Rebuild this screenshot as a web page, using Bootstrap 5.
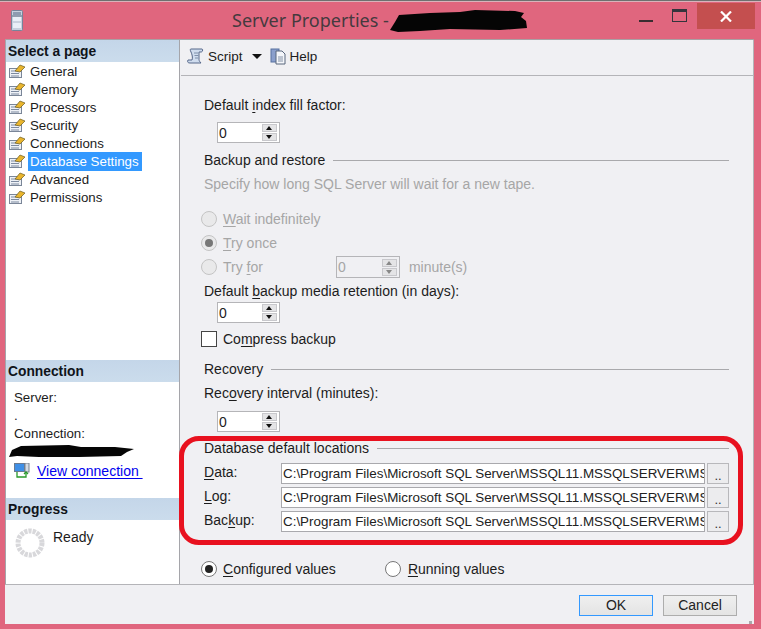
<!DOCTYPE html>
<html lang="en">
<head>
<meta charset="utf-8">
<title>Server Properties</title>
<link rel="stylesheet" href="https://cdn.jsdelivr.net/npm/bootstrap@5.3.0/dist/css/bootstrap.min.css">
<style>
html,body{margin:0;height:629px;overflow:hidden}
body{background:#e0667e;font:14px/20px "Liberation Sans",Arial,sans-serif;color:#1c1c1c;position:relative}
u{text-underline-offset:2px;text-decoration-thickness:1px}
.win-top{height:2px;background:linear-gradient(#6f6f6f 0 1px,#d9b3bb 1px)}
.title-bar{height:37px;position:relative}
.app-ico{position:absolute;left:11px;top:8px}
.win-title{position:absolute;left:232px;top:5px;font:18px/26px "Noto Sans",sans-serif;color:#453a3e;white-space:nowrap}
.blot-a{position:absolute;left:390px;top:7px}
.btn-min{position:absolute;left:639px;top:18px;width:14px;height:2px;background:#3a2c30}
.btn-max{position:absolute;left:672px;top:7px;width:15px;height:13px;border:1px solid #33343c;border-top-width:3px}
.btn-close-x{position:absolute;left:697px;top:1px;width:58px;height:26px;background:#c44f4f;color:#fff;display:flex;align-items:center;justify-content:center}
.client{margin:0 7px 0 5px;height:585px;background:#f0f0f3;display:flex;flex-direction:column;border-top:1px solid #a9a0a4}
.main-area{height:545px;display:flex;border-bottom:1px solid #b4b4b8}
.side{width:175px;flex:none;background:#fff;border-left:1px solid #a5a5aa;border-right:1px solid #a5a5aa;position:relative;display:flex;flex-direction:column}
.side-head{height:22px;background:linear-gradient(#c4d6e9,#cbdcec);font-weight:700;line-height:24px;padding-left:2px;color:#10141a;font-size:13.8px}
.page-list{height:298px}
.page-row{height:18px;line-height:19px;display:flex;align-items:center;padding-left:3px;font-size:13.3px}
.page-row svg{margin-right:4px;flex:none}
.page-row span{padding:0 3px 0 0}
.page-row.sel span{background:#3399ff;color:#fff}
.page-row.sel svg{margin-right:2px}
.page-row.sel span{padding:0 3px 0 2px}
.conn-box{height:116px;padding:7px 0 0 8px;position:relative;font-size:13.3px}
.conn-box div{height:18px;line-height:18px}
.blot-b{position:absolute;left:3px;top:62px}
.conn-link{display:flex;align-items:center;gap:7px;font-size:14px;margin-top:-2px}
.conn-link a{color:#0000ee;text-decoration:underline;text-underline-offset:2px;white-space:pre}
.prog-box{flex:1;display:flex;padding:7px 0 0 9px;gap:8px}
.prog-box svg{margin-top:1px}
.right-pane{flex:1;display:flex;flex-direction:column;min-width:0;padding-left:1px;border-right:1px solid #b4b4b8}
.tool-strip{height:36px;border-bottom:1px solid #b4b4b8;display:flex;align-items:center;padding:0 0 2px 6px;flex:none;font-size:13.5px}
.tool-strip svg{flex:none}
.tool-txt{margin-left:4px}
.caret-d{width:0;height:0;border-left:5px solid transparent;border-right:5px solid transparent;border-top:5px solid #111;margin:0 8px 0 9px}
.form-pane{padding:19px 0 0 23px;position:relative}
.line{height:20px;white-space:nowrap}
.muted-t{color:#a6a6a6}
.spin{width:63px;height:21px;margin-left:13px;background:#fff;border:1px solid #b5b5b8;display:flex;align-items:center;justify-content:space-between;padding:0 2px 0 1px;line-height:18px}
.spin.off{width:64px;height:22px;background:#f0f0f3;margin:0 0 0 67px;color:#a6a6a6}
.arrows{width:15px;height:17px;display:flex;flex-direction:column;gap:1px}
.arrows i{flex:1;background:#e4e4e6;border:1px solid #c8c8cc;position:relative;display:block}
.arrows i::after{content:"";position:absolute;left:3px;width:0;height:0;border-left:3.5px solid transparent;border-right:3.5px solid transparent}
.arrows i.up::after{top:1px;border-bottom:4px solid #111}
.arrows i.dn::after{top:1px;border-top:4px solid #111}
.spin.off i.up::after{border-bottom-color:#888}
.spin.off i.dn::after{border-top-color:#888}
.group-line{display:flex;align-items:center;gap:8px;margin-right:24px}
.group-line::after{content:"";flex:1;height:1px;background:#a9a9ac}
.radio-row{display:flex;align-items:center;gap:6px;margin-left:-3px}
.rad{width:16px;height:16px;border-radius:50%;border:1px solid #777;background:#fff;flex:none;display:flex;align-items:center;justify-content:center}
.rad.on::after{content:"";width:8px;height:8px;border-radius:50%;background:#222}
.rad.off{border-color:#c4c4c4;background:#e9e9ea}
.rad.off.on::after{background:#777}
.rad.far{margin-left:43px}
.rad.far + span{margin-left:1px}
.chk{width:16px;height:16px;border:1px solid #444;background:#fff;flex:none}
.m4{margin-top:4px}.m1{margin-top:1px}.m6{margin-top:6px}.m7{margin-top:7px}.m8{margin-top:8px}.m10{margin-top:10px}.m15{margin-top:15px}.m5{margin-top:5px}.m27{margin-top:27px}.m3{margin-top:3px}
.min-t{margin-left:3px}
.loc-row{display:flex;height:21px;align-items:center}
.loc-lab{width:77px;flex:none;margin-top:-3px}
.loc-in{width:424px;height:21px;border:1px solid #a9a9ad;background:#fff;overflow:hidden;white-space:nowrap;padding:0 0 0 1px;line-height:19px;color:#222;flex:none;font-size:13.4px}
.loc-btn{width:22px;height:21px;margin-left:2px;border:1px solid #b8b8bb;background:#ececee;font-size:13px;line-height:24px;text-align:center;flex:none;color:#333}
.red-ring{position:absolute;left:-2px;top:360px;width:564px;height:109px;border:5px solid #e8111f;border-radius:20px;pointer-events:none}
.foot{flex:1;display:flex;justify-content:flex-end;align-items:flex-start;padding:10px 17px 0 0;gap:10px}
.dlg-btn{width:74px;height:21px;border:1px solid #adadad;background:linear-gradient(#efefef,#e4e4e4);text-align:center;line-height:19px;color:#222}
.dlg-btn.focus{border-color:#3399ff}
.grip{position:absolute;left:749px;top:621px;width:3px;height:3px;background:#a9a9ac}
</style>
</head>
<body>
<div class="win-top"></div>
<div class="title-bar">
  <svg class="app-ico" width="12" height="21" viewBox="0 0 12 21"><rect x=".5" y=".5" width="11" height="20" rx="1" fill="#c6d0de" stroke="#77849a"/><rect x="2" y="2" width="8" height="3" fill="#8d9bb0"/><path d="M1 6h10" stroke="#5d6b80"/><rect x="2" y="7" width="8" height="11" fill="#e9eff7"/><path d="M2 12h8" stroke="#aab6c8"/></svg>
  <div class="win-title">Server Properties -</div>
  <svg class="blot-a" width="140" height="24" viewBox="0 0 140 24"><path d="M9 6 L40 4 L70 3 L85 1 L125 2 L134 4 L131 8 L136 12 L137 19 L110 21 L60 20 L30 22 L8 23 L0 21 L5 13Z" fill="#050505"/></svg>
  <div class="btn-min"></div>
  <div class="btn-max"></div>
  <div class="btn-close-x"><svg width="12" height="11" viewBox="0 0 12 11"><path d="M1 .5l10 10M11 .5l-10 10" stroke="#fff" stroke-width="2.2"/></svg></div>
</div>
<div class="client">
  <div class="main-area">
    <div class="side">
      <div class="side-head">Select a page</div>
      <div class="page-list">
        <div class="page-row"><svg width="17" height="14" viewBox="0 0 17 14"><use href="#pg"/></svg><span>General</span></div>
        <div class="page-row"><svg width="17" height="14" viewBox="0 0 17 14"><use href="#pg"/></svg><span>Memory</span></div>
        <div class="page-row"><svg width="17" height="14" viewBox="0 0 17 14"><use href="#pg"/></svg><span>Processors</span></div>
        <div class="page-row"><svg width="17" height="14" viewBox="0 0 17 14"><use href="#pg"/></svg><span>Security</span></div>
        <div class="page-row"><svg width="17" height="14" viewBox="0 0 17 14"><use href="#pg"/></svg><span>Connections</span></div>
        <div class="page-row sel"><svg width="17" height="14" viewBox="0 0 17 14"><use href="#pg"/></svg><span>Database Settings</span></div>
        <div class="page-row"><svg width="17" height="14" viewBox="0 0 17 14"><use href="#pg"/></svg><span>Advanced</span></div>
        <div class="page-row"><svg width="17" height="14" viewBox="0 0 17 14"><use href="#pg"/></svg><span>Permissions</span></div>
      </div>
      <div class="side-head">Connection</div>
      <div class="conn-box">
        <div>Server:</div>
        <div>.</div>
        <div>Connection:</div>
        <svg class="blot-b" width="126" height="14" viewBox="0 0 126 14"><path d="M3 6L12 2 60 1 72 3 106 3 125 5 118 8 112 12 70 13 30 13 8 12 0 13Z" fill="#050505"/></svg>
        <div class="m3"></div>
        <div class="conn-link">
          <svg width="16" height="16" viewBox="0 0 16 16"><rect x=".5" y=".5" width="10" height="8" fill="#3f8fe6" stroke="#6a7a90"/><rect x="11" y="0" width="4" height="9" fill="#d5dbe3" stroke="#77808c"/><path d="M3 9v5h9V10" fill="none" stroke="#2a9a2a" stroke-width="1.3"/><path d="M10 11l2-2 2 2" fill="none" stroke="#2a9a2a" stroke-width="1.3"/></svg>
          <a href="#">View connection </a>
        </div>
      </div>
      <div class="side-head">Progress</div>
      <div class="prog-box">
        <svg width="30" height="30" viewBox="0 0 30 30"><circle cx="15" cy="15" r="12" fill="none" stroke="#d8d8db" stroke-width="5" stroke-dasharray="3.2 1"/></svg>
        <span>Ready</span>
      </div>
    </div>
    <div class="right-pane">
      <div class="tool-strip">
        <svg width="17" height="17" viewBox="0 0 17 17"><path d="M4 1h11c1 0 1 3-1 3h-2v7c0 1 0 2 2 4H3c-2 0-3-1-2-3h4C6 10 5 6 4 4 3 2 3 1 4 1z" fill="#cfdcee" stroke="#56688a"/><path d="M7 5h4M7.500 7.500h4M8 10h3" stroke="#7f90aa"/></svg>
        <span class="tool-txt">Script</span>
        <span class="caret-d"></span>
        <svg width="16" height="17" viewBox="0 0 16 17"><rect x="1" y="1" width="8" height="13" fill="#8a9fcc" stroke="#5670a0"/><path d="M6 3h6l3 3v10H6z" fill="#f4f6fa" stroke="#58667c"/><path d="M8 9h5M8 11h5M8 13h5" stroke="#8592a6"/></svg>
        <span class="tool-txt">Help</span>
      </div>
      <div class="form-pane">
        <div class="line">Default <u>i</u>ndex fill factor:</div>
        <div class="spin m7"><span>0</span><span class="arrows"><i class="up"></i><i class="dn"></i></span></div>
        <div class="line group-line m7">Backup and restore</div>
        <div class="line muted-t m4">Specify how long SQL Server will wait for a new tape.</div>
        <div class="line radio-row muted-t m15"><span class="rad off"></span><span><u>W</u>ait indefinitely</span></div>
        <div class="line radio-row muted-t m4"><span class="rad off on"></span><span><u>T</u>ry once</span></div>
        <div class="line radio-row muted-t m4"><span class="rad off"></span><span>Try <u>f</u>or</span><span class="spin off"><span>0</span><span class="arrows"><i class="up"></i><i class="dn"></i></span></span><span class="min-t">minute(s)</span></div>
        <div class="line m4">Default <u>b</u>ackup media retention (in days):</div>
        <div class="spin m1"><span>0</span><span class="arrows"><i class="up"></i><i class="dn"></i></span></div>
        <div class="line radio-row m6"><span class="chk"></span><span>Co<u>m</u>press backup</span></div>
        <div class="line group-line m10">Recovery</div>
        <div class="line m4">Rec<u>o</u>very interval (minutes):</div>
        <div class="spin m8"><span>0</span><span class="arrows"><i class="up"></i><i class="dn"></i></span></div>
        <div class="line group-line m6">Database default locations</div>
        <div class="loc-row m5"><span class="loc-lab"><u>D</u>ata:</span><span class="loc-in">C:\Program Files\Microsoft SQL Server\MSSQL11.MSSQLSERVER\MS</span><span class="loc-btn">..</span></div>
        <div class="loc-row m3"><span class="loc-lab"><u>L</u>og:</span><span class="loc-in">C:\Program Files\Microsoft SQL Server\MSSQL11.MSSQLSERVER\MS</span><span class="loc-btn">..</span></div>
        <div class="loc-row m3"><span class="loc-lab">Bac<u>k</u>up:</span><span class="loc-in">C:\Program Files\Microsoft SQL Server\MSSQL11.MSSQLSERVER\MS</span><span class="loc-btn">..</span></div>
        <div class="line radio-row m27"><span class="rad on"></span><span><u>C</u>onfigured values</span><span class="rad far"></span><span><u>R</u>unning values</span></div>
        <div class="red-ring"></div>
      </div>
    </div>
  </div>
  <div class="foot">
    <div class="dlg-btn focus">OK</div>
    <div class="dlg-btn">Cancel</div>
  </div>
</div>
<div class="grip"></div>
<svg width="0" height="0" class="d-block"><defs><g id="pg"><rect x=".5" y="4.500" width="12" height="9" fill="#eef1f6" stroke="#7a8698"/><path d="M2 7h8M2 9.500h8M2 12h8" stroke="#7c8aa0"/><path d="M6 7l5-6 5 2-5 5z" fill="#e9b52e" stroke="#6a5a20" stroke-width=".7"/></g></defs></svg>
</body>
</html>
